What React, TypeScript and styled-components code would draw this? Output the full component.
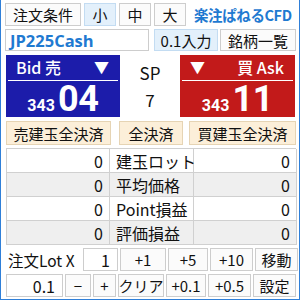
import React from "react";
import styled, { createGlobalStyle, css } from "styled-components";

const Global = createGlobalStyle`
  html, body { margin: 0; padding: 0; background: #ffffff; }
  * { box-sizing: border-box; }
`;

const FONT = `"Noto Sans CJK JP", "Noto Sans", sans-serif`;

const Window = styled.div`
  width: 300px;
  height: 300px;
  background: #ffffff;
  border-left: 1px solid #2f7fd8;
  border-right: 1px solid #2f7fd8;
  border-bottom: 1px solid #2f7fd8;
  padding: 3px 4px 0 4px;
  display: flex;
  flex-direction: column;
  font-family: ${FONT};
  color: #111;
`;

const Row = styled.div<{ $h: number; $mt?: number; $gap?: number; $pl?: number }>`
  display: flex;
  align-items: stretch;
  height: ${(p) => p.$h}px;
  margin-top: ${(p) => p.$mt ?? 0}px;
  gap: ${(p) => p.$gap ?? 3}px;
  padding-left: ${(p) => p.$pl ?? 0}px;
`;

type Tone = "plain" | "active" | "tan";

const Btn = styled.div<{ $w: number; $tone?: Tone; $ml?: number }>`
  width: ${(p) => p.$w}px;
  flex: none;
  margin-left: ${(p) => p.$ml ?? 0}px;
  display: flex;
  align-items: center;
  justify-content: center;
  font-size: 15px;
  line-height: 1;
  border: 1px solid #cdcdcd;
  background: #fbfbfb;
  color: #111;
  white-space: nowrap;
  ${(p) =>
    p.$tone === "active" &&
    css`
      background: #e3f0fb;
      border-color: #c3dcf2;
    `}
  ${(p) =>
    p.$tone === "tan" &&
    css`
      background: #fcefd9;
      border-color: #e6d4b4;
    `}
`;

const Title = styled.div`
  margin-left: 5px;
  display: flex;
  align-items: center;
  font-size: 14.5px;
  font-weight: 700;
  color: #1f7ad1;
  letter-spacing: -0.4px;
  white-space: nowrap;
`;

const Symbol = styled.div`
  width: 144px;
  flex: none;
  border: 1px solid #cdcdcd;
  background: #fff;
  display: flex;
  align-items: center;
  padding-left: 4px;
  font-family: "Open Sans", ${FONT};
  font-weight: 700;
  font-size: 16.5px;
  color: #1f7ad1;
`;

const PriceRow = styled.div`
  display: flex;
  height: 62px;
  margin-top: 4px;
  padding-left: 1px;
`;

const PriceBox = styled.div<{ $side: "bid" | "ask" }>`
  width: ${(p) => (p.$side === "bid" ? 114 : 115)}px;
  flex: none;
  background: ${(p) => (p.$side === "bid" ? "#1c1caa" : "#c21a1a")};
  color: #fff;
  display: flex;
  flex-direction: column;
  padding: 0 2px;
`;

const PriceHead = styled.div`
  height: 26px;
  flex: none;
  border-bottom: 1px solid #ffffff;
  display: flex;
  align-items: center;
  justify-content: space-between;
  padding: 0 9px 2px 8px;
  font-size: 16px;
  font-weight: 500;
  line-height: 18px;
  overflow: hidden;
`;

const Tri = styled.span`
  font-size: 15px;
`;

const PriceValue = styled.div`
  flex: 1;
  display: flex;
  align-items: flex-end;
  justify-content: center;
  gap: 3px;
  padding-bottom: 1px;
  font-family: Roboto, "Open Sans", sans-serif;
  font-weight: 700;
  line-height: 1;
`;

const Small = styled.span`
  font-size: 16px;
  margin-bottom: 3px;
`;

const Big = styled.span`
  font-size: 36px;
  letter-spacing: -0.3px;
`;

const Spread = styled.div`
  flex: 1;
  display: flex;
  flex-direction: column;
  align-items: center;
  justify-content: space-around;
  padding: 4px 0 4px;
  font-size: 17px;
  line-height: 1;
`;

const Table = styled.div`
  margin-top: 3px;
  margin-left: 1px;
  width: 290px;
  display: grid;
  grid-template-columns: 103px 84px 103px;
  grid-auto-rows: 24px;
  border-top: 1px solid #d0d0d0;
  border-left: 1px solid #d0d0d0;
`;

const Cell = styled.div<{ $alt: boolean; $label?: boolean }>`
  border-right: 1px solid #d0d0d0;
  border-bottom: 1px solid #d0d0d0;
  background: ${(p) => (p.$alt ? "#efefef" : "#ffffff")};
  display: flex;
  align-items: center;
  justify-content: ${(p) => (p.$label ? "flex-start" : "flex-end")};
  padding: ${(p) => (p.$label ? "0 0 0 6px" : "0 6px 0 0")};
  font-size: 16px;
  line-height: 1;
  white-space: nowrap;
`;

const Label = styled.div`
  width: 75px;
  flex: none;
  display: flex;
  align-items: center;
  padding-left: 3px;
  font-size: 15.5px;
  white-space: nowrap;
`;

const Field = styled.div<{ $w: number; $ml?: number }>`
  width: ${(p) => p.$w}px;
  flex: none;
  margin-left: ${(p) => p.$ml ?? 0}px;
  border: 1px solid #cdcdcd;
  background: #fff;
  display: flex;
  align-items: center;
  justify-content: flex-end;
  padding-right: 7px;
  font-size: 16px;
  line-height: 1;
`;

const rows = [
  { l: "0", m: "建玉ロット", r: "0" },
  { l: "0", m: "平均価格", r: "0" },
  { l: "0", m: "Point損益", r: "0" },
  { l: "0", m: "評価損益", r: "0" },
];

export default function App() {
  return (
    <>
      <Global />
      <Window>
        <Row $h={23}>
          <Btn $w={76}>注文条件</Btn>
          <Btn $w={32} $tone="active">小</Btn>
          <Btn $w={32}>中</Btn>
          <Btn $w={32}>大</Btn>
          <Title>楽注ぱねるCFD</Title>
        </Row>
        <Row $h={22} $mt={3} $gap={0}>
          <Symbol>JP225Cash</Symbol>
          <Btn $w={64} $tone="active" $ml={5}>0.1入力</Btn>
          <Btn $w={76} $ml={2}>銘柄一覧</Btn>
        </Row>
        <PriceRow>
          <PriceBox $side="bid">
            <PriceHead>
              <span>Bid 売</span>
              <Tri>▼</Tri>
            </PriceHead>
            <PriceValue>
              <Small>343</Small>
              <Big>04</Big>
            </PriceValue>
          </PriceBox>
          <Spread>
            <span>SP</span>
            <span>7</span>
          </Spread>
          <PriceBox $side="ask">
            <PriceHead>
              <Tri>▼</Tri>
              <span>買 Ask</span>
            </PriceHead>
            <PriceValue>
              <Small>343</Small>
              <Big>11</Big>
            </PriceValue>
          </PriceBox>
        </PriceRow>
        <Row $h={24} $mt={4} $gap={0} $pl={1}>
          <Btn $w={105} $tone="tan">売建玉全決済</Btn>
          <Btn $w={64} $tone="tan" $ml={8}>全決済</Btn>
          <Btn $w={107} $tone="tan" $ml={6}>買建玉全決済</Btn>
        </Row>
        <Table>
          {rows.map((r, i) => (
            <React.Fragment key={r.m}>
              <Cell $alt={i % 2 === 1}>{r.l}</Cell>
              <Cell $alt={i % 2 === 1} $label>{r.m}</Cell>
              <Cell $alt={i % 2 === 1}>{r.r}</Cell>
            </React.Fragment>
          ))}
        </Table>
        <Row $h={23} $mt={3} $gap={2}>
          <Label>注文Lot X</Label>
          <Field $w={35} $ml={1}>1</Field>
          <Btn $w={46}>+1</Btn>
          <Btn $w={40}>+5</Btn>
          <Btn $w={43}>+10</Btn>
          <Btn $w={43}>移動</Btn>
        </Row>
        <Row $h={23} $mt={3} $gap={2} $pl={1}>
          <Field $w={57}>0.1</Field>
          <Btn $w={26}>−</Btn>
          <Btn $w={23}>+</Btn>
          <Btn $w={46}>クリア</Btn>
          <Btn $w={40}>+0.1</Btn>
          <Btn $w={43}>+0.5</Btn>
          <Btn $w={43}>設定</Btn>
        </Row>
      </Window>
    </>
  );
}
